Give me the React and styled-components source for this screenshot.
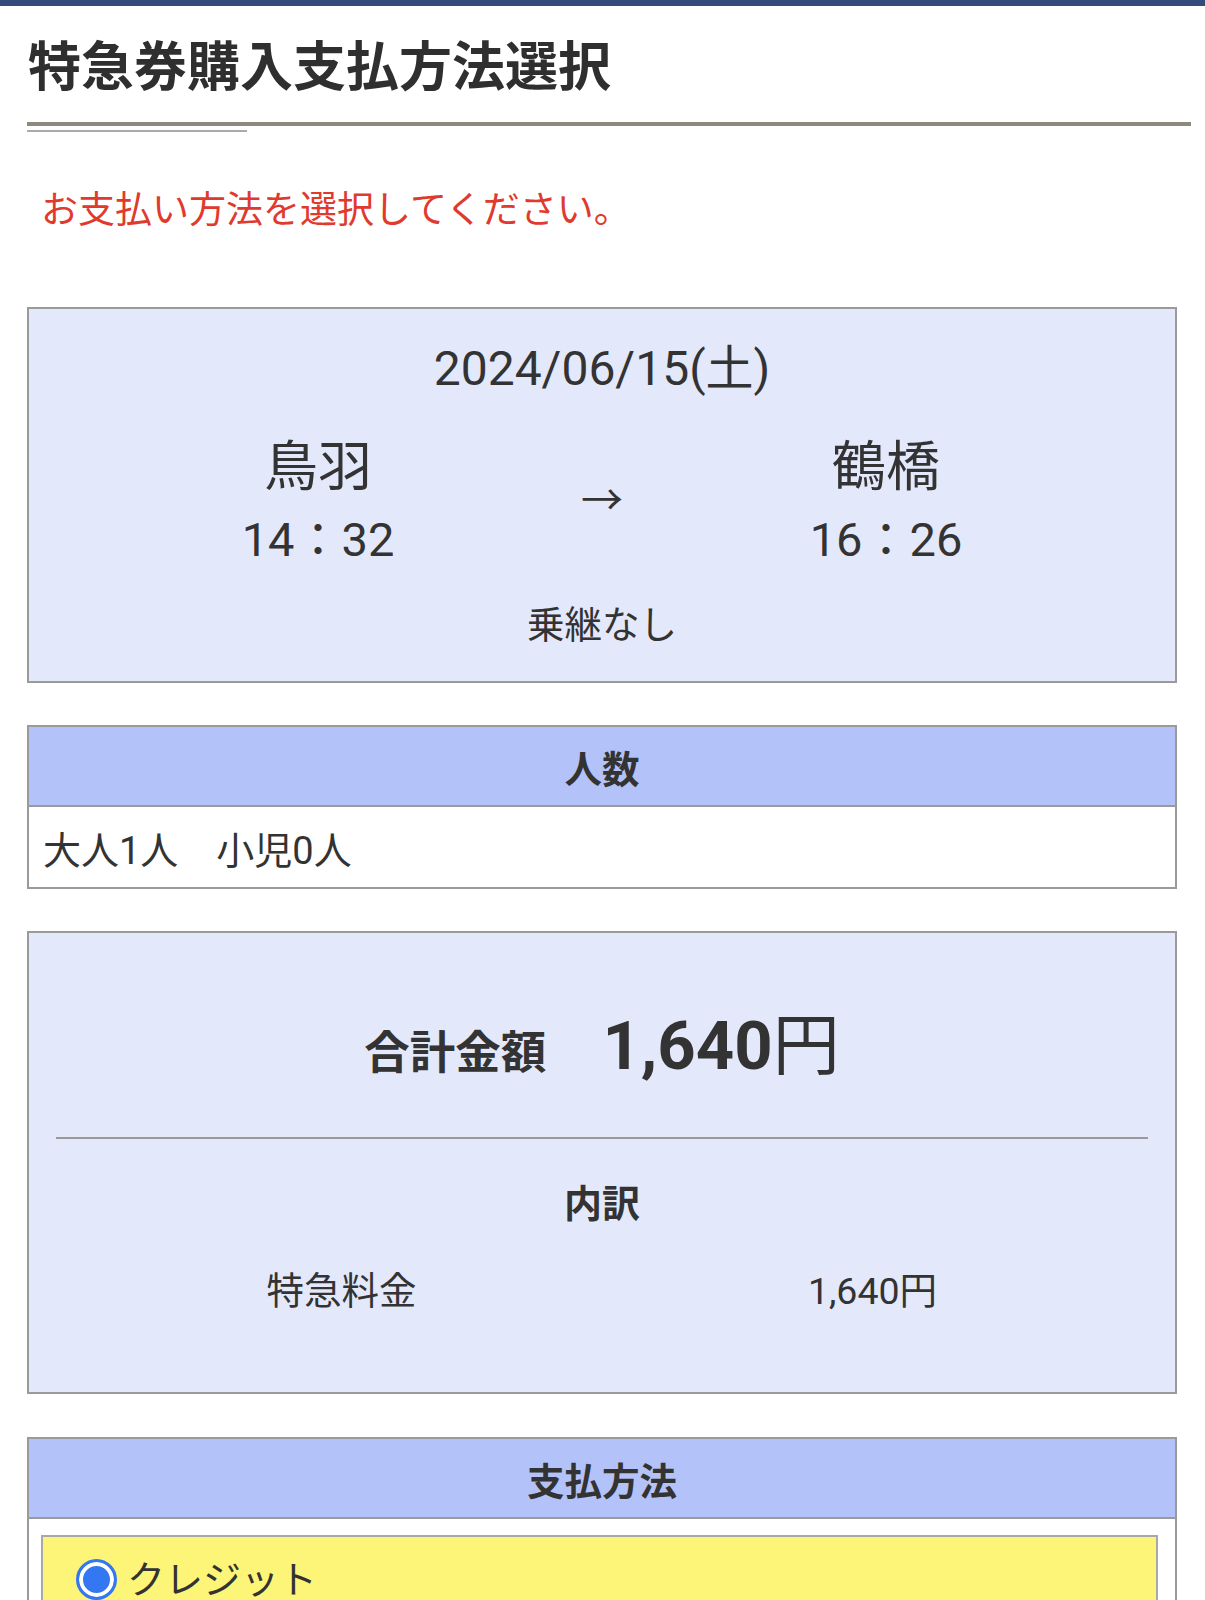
import React from "react";
import styled, { createGlobalStyle } from "styled-components";

const GlobalStyle = createGlobalStyle`
  *, *::before, *::after {
    box-sizing: border-box;
  }
  html, body {
    margin: 0;
    padding: 0;
    background: #fff;
  }
  body {
    font-family: "Roboto", "Noto Sans CJK JP", sans-serif;
    color: #333;
  }
`;

const TopBar = styled.div`
  height: 6px;
  background: #354b7c;
`;

const Page = styled.div`
  padding: 0 0 40px 27px;
`;

const Heading = styled.h1`
  width: 1164px;
  margin: 30px 0 0;
  padding: 0 0 22px 1px;
  border-bottom: 4px solid #8c8a7c;
  font-size: 53px;
  line-height: 64px;
  font-weight: 700;
  color: #2f2f2f;
`;

const HeadingUnder = styled.div`
  width: 220px;
  height: 2px;
  margin-top: 4px;
  background: #aaa;
`;

const Notice = styled.p`
  margin: 53px 0 0 14px;
  font-size: 37px;
  line-height: 52px;
  color: #e03a2f;
`;

const Box = styled.section`
  width: 1150px;
  margin-top: ${(p) => p.$gap || 42}px;
  border: 2px solid #9a9a9a;
  background: ${(p) => (p.$tint ? "#e3e8fb" : "#fff")};
`;

const RouteBox = styled(Box)`
  padding: 30px 0 31px;
  text-align: center;
`;

const DateLine = styled.div`
  font-size: 48px;
  line-height: 60px;
`;

const Route = styled.div`
  display: grid;
  grid-template-columns: repeat(3, 284px);
  justify-content: center;
  align-items: center;
  margin-top: 34px;
`;

const Stop = styled.div`
  display: flex;
  flex-direction: column;
  align-items: center;
`;

const StationName = styled.div`
  font-size: 54px;
  line-height: 70px;
`;

const StopTime = styled.div`
  font-size: 47px;
  line-height: 74px;
`;

const Arrow = styled.div`
  font-size: 42px;
  line-height: 60px;
  padding-bottom: 8px;
`;

const Transfer = styled.div`
  margin-top: 23px;
  font-size: 37.5px;
  line-height: 50px;
`;

const Header = styled.div`
  height: 80px;
  display: flex;
  align-items: center;
  justify-content: center;
  background: #b3c3fa;
  border-bottom: 2px solid #9a9a9a;
  font-size: 37.5px;
  font-weight: 700;
`;

const PlainRow = styled.div`
  height: 80px;
  display: flex;
  align-items: center;
  padding-left: 14px;
  font-size: 38px;
`;

const TotalBox = styled(Box)`
  padding: 75px 27px 75px;
`;

const TotalLine = styled.div`
  display: flex;
  justify-content: center;
  align-items: baseline;
  gap: 56px;
  line-height: 76px;
`;

const TotalLabel = styled.span`
  font-size: 45.5px;
  font-weight: 700;
`;

const TotalValue = styled.span`
  font-size: 67px;
  font-weight: 700;
`;

const Yen = styled.span`
  font-weight: 400;
`;

const Divider = styled.hr`
  margin: 45px 0 0;
  border: none;
  height: 2px;
  background: #999;
`;

const SubHead = styled.div`
  margin-top: 39px;
  text-align: center;
  font-size: 38px;
  line-height: 52px;
  font-weight: 700;
`;

const Breakdown = styled.div`
  display: grid;
  grid-template-columns: repeat(2, 531px);
  justify-content: center;
  margin: 35px 0 0 10px;
  font-size: 37.5px;
  line-height: 52px;
  text-align: center;
`;

const MethodBody = styled.div`
  padding: 16px 17px 0 12px;
`;

const Option = styled.div`
  display: flex;
  align-items: center;
  gap: 10px;
  padding: 22px 0 30px 33px;
  background: #fdf577;
  border: 2px solid #a8a8a8;
  font-size: 38px;
  line-height: 40px;
`;

const Radio = styled.span`
  width: 41px;
  height: 41px;
  border-radius: 50%;
  border: 3px solid #3377f2;
  background: #3377f2;
  box-shadow: inset 0 0 0 4px #fff;
  flex: none;
`;

export default function App() {
  return (
    <>
      <GlobalStyle />
      <TopBar />
      <Page>
        <Heading>特急券購入支払方法選択</Heading>
        <HeadingUnder />
        <Notice>お支払い方法を選択してください。</Notice>

        <RouteBox $tint $gap={70}>
          <DateLine>2024/06/15(土)</DateLine>
          <Route>
            <Stop>
              <StationName>鳥羽</StationName>
              <StopTime>14：32</StopTime>
            </Stop>
            <Arrow>→</Arrow>
            <Stop>
              <StationName>鶴橋</StationName>
              <StopTime>16：26</StopTime>
            </Stop>
          </Route>
          <Transfer>乗継なし</Transfer>
        </RouteBox>

        <Box>
          <Header>人数</Header>
          <PlainRow>大人1人　小児0人</PlainRow>
        </Box>

        <TotalBox $tint>
          <TotalLine>
            <TotalLabel>合計金額</TotalLabel>
            <TotalValue>
              1,640<Yen>円</Yen>
            </TotalValue>
          </TotalLine>
          <Divider />
          <SubHead>内訳</SubHead>
          <Breakdown>
            <div>特急料金</div>
            <div>1,640円</div>
          </Breakdown>
        </TotalBox>

        <Box $gap={43}>
          <Header>支払方法</Header>
          <MethodBody>
            <Option>
              <Radio />
              <span>クレジット</span>
            </Option>
          </MethodBody>
        </Box>
      </Page>
    </>
  );
}
